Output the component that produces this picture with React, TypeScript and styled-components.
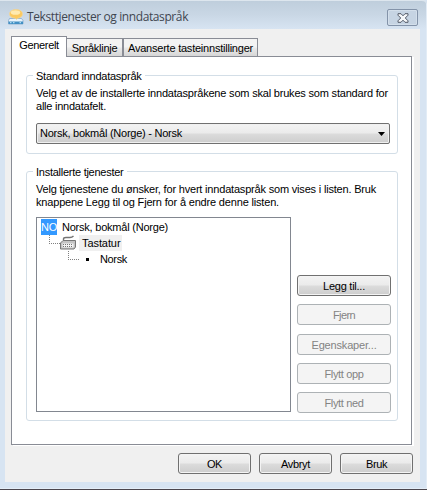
import React from "react";
import styled, { createGlobalStyle } from "styled-components";

const GlobalStyle = createGlobalStyle`
  * { box-sizing: border-box; }
  body { margin: 0; background: #d7e4f2; }
`;

const Window = styled.main`
  display: flex;
  flex-direction: column;
  width: 427px;
  height: 490px;
  padding: 0 7px 7px 5px;
  border-top: 1px solid #dde6ee;
  border-bottom: 1px solid #4b464d;
  border-top-right-radius: 4px;
  background: linear-gradient(#bfcedc 0, #c9d7e5 14px, #d7e4f2 28px);
  box-shadow: inset 0 -1px #e4eef8, inset -1px 0 #e2ecf6;
  color: #000;
  font: 11px/13px "Liberation Sans", Arial, sans-serif;
`;

const TitleBar = styled.header`
  display: flex;
  align-items: flex-start;
  flex: 0 0 28px;
  padding: 8px 2px 0 3px;
`;

const AppIcon = styled.svg`
  width: 16px;
  height: 16px;
`;

const Title = styled.h1`
  flex: 1;
  margin: 0 0 0 3px;
  color: #3f4650;
  font: 12px/16px "Open Sans", "Noto Sans", sans-serif;
  letter-spacing: -0.4px;
  white-space: nowrap;
`;

const CloseButton = styled.button`
  display: flex;
  align-items: center;
  justify-content: center;
  width: 31px;
  height: 17px;
  padding: 0;
  border: 1px solid #8393a9;
  border-radius: 2px;
  background: #c6d4e3;
  box-shadow: inset 0 0 0 1px #d3dfeb;
`;

const Client = styled.div`
  display: flex;
  flex-direction: column;
  flex: 1;
  padding: 7px 7px 0 6px;
  background: #f0f0f0;
`;

const TabStrip = styled.nav`
  display: flex;
  align-items: flex-end;
  height: 20px;
`;

const Tab = styled.button<{ $selected?: boolean; $width: number }>`
  position: relative;
  z-index: ${(p) => (p.$selected ? 1 : 0)};
  width: ${(p) => p.$width}px;
  height: ${(p) => (p.$selected ? 21 : 18)}px;
  margin-bottom: ${(p) => (p.$selected ? -1 : 0)}px;
  padding: ${(p) => (p.$selected ? "0 0 3px" : "2px 0 0")};
  border: 1px solid #898c95;
  border-bottom: 0;
  background: ${(p) => (p.$selected ? "#fff" : "linear-gradient(#f3f3f3 0 45%, #e8e8e8 55%, #d6d6d6)")};
  color: #000;
  font: inherit;
  white-space: nowrap;
  &:nth-child(2) { border-left: 0; }
`;

const Panel = styled.section`
  display: flex;
  flex-direction: column;
  gap: 17px;
  width: 401px;
  height: 389px;
  padding: 13px 13px 0 14px;
  border: 1px solid #898c95;
  background: #fff;
  box-shadow: 2px 1px #fff;
`;

const Group = styled.section<{ $height: number }>`
  display: flex;
  flex-direction: column;
  width: 372px;
  height: ${(p) => p.$height}px;
  margin-top: 5px;
  padding: 0 7px 0 9px;
  border: 1px solid #d3dee7;
  border-radius: 3px;
  & + & { margin-top: 0; }
`;

const Legend = styled.h2`
  align-self: flex-start;
  height: 13px;
  margin: -6px 0 0 -3px;
  padding: 0 3px;
  background: #fff;
  font: inherit;
`;

const Description = styled.p`
  height: 26px;
  margin: 4px 0 0;
`;

const Line = styled.span`
  display: block;
  white-space: nowrap;
`;

const Text = styled.span<{ $track: number }>`
  letter-spacing: ${(p) => p.$track}px;
  white-space: nowrap;
`;

const glossy = "linear-gradient(#f3f3f3 0, #ebebeb 48%, #dcdcdc 52%, #cdcdcd 100%)";

const Select = styled.button`
  display: flex;
  align-items: center;
  justify-content: space-between;
  width: 354px;
  height: 21px;
  margin-top: 10px;
  padding: 0 4px 0 3px;
  border: 1px solid #707070;
  border-radius: 2px;
  background: ${glossy};
  box-shadow: inset 0 0 0 1px #f0f0f0;
  color: #000;
  font: inherit;
`;

const Services = styled.div`
  display: flex;
  justify-content: space-between;
  align-items: flex-end;
  width: 355px;
  height: 196px;
  margin-top: 8px;
`;

const Tree = styled.ul`
  width: 255px;
  height: 195px;
  margin: 0;
  align-self: flex-start;
  padding: 1px 4px;
  border: 1px solid #828790;
  list-style: none;
`;

const TreeItem = styled.li`
  display: flex;
  align-items: center;
  height: 16px;
`;

const Branch = styled.i<{ $indent: number; $width: number }>`
  width: ${(p) => p.$width}px;
  height: 9px;
  align-self: flex-start;
  flex: none;
  margin-left: ${(p) => p.$indent}px;
  border-left: 1px dotted #808080;
  border-bottom: 1px dotted #808080;
`;

const LanguageBadge = styled.b`
  width: 16px;
  height: 16px;
  margin-right: 5px;
  background: #3399ff;
  color: #fff;
  font-size: 11px;
  font-weight: 400;
  line-height: 17px;
  letter-spacing: -0.3px;
  text-align: center;
`;

const KeyboardIcon = styled.svg`
  width: 16px;
  height: 16px;
`;

const Highlight = styled.span`
  height: 16px;
  width: 43px;
  margin-left: 3px;
  padding-left: 3px;
  background: #f0f0f0;
  line-height: 16px;
`;

const Bullet = styled.i`
  width: 3px;
  height: 3px;
  margin: 1px 11px 0 7px;
  background: #000;
`;

const ActionColumn = styled.div`
  display: flex;
  flex-direction: column;
  gap: 8px;
`;

const Button = styled.button<{ $width: number }>`
  width: ${(p) => p.$width}px;
  height: 21px;
  padding: 1px 0 0;
  border: 1px solid #707070;
  border-radius: 3px;
  background: ${glossy};
  box-shadow: inset 0 0 0 1px #f4f4f4;
  color: #000;
  font: inherit;
  &:disabled {
    border-color: #adb2b5;
    background: #f4f4f4;
    color: #838383;
  }
  &:nth-child(3):disabled { margin-top: 1px; }
`;

const Footer = styled.footer`
  display: flex;
  justify-content: flex-end;
  gap: 8px;
  padding: 8px 0 0;
`;

const actions = [
  { label: "Legg til...", track: -0.24, enabled: true },
  { label: "Fjern", track: -0.61 },
  { label: "Egenskaper...", track: -0.17 },
  { label: "Flytt opp", track: -0.35 },
  { label: "Flytt ned", track: -0.35 },
];

export default function App() {
  return (
    <>
      <GlobalStyle />
      <Window>
        <TitleBar>
          <AppIcon viewBox="0 0 16 16">
            <path d="M1.500 9.500h12l1.500 2v3.500H.5v-3.500z" fill="#e9f4fc" stroke="#86aacb" strokeWidth=".8" />
            <path d="M.5 12.500H15V15H.5z" fill="#4390c4" />
            <path d="M2 13.700h1.500M5 13.700h1.500M11.500 13.700H13" stroke="#c9ecfb" />
            <path d="M8 .5c3.800 0 6.500 1.800 6.500 4.400S12 9 9.700 9.200L8.500 10.500 7.300 9.200C3.800 9 1.500 7.300 1.500 4.900S4.200.5 8 .5z" fill="#fbc95f" stroke="#f2d79c" strokeWidth=".7" />
            <ellipse cx="7.500" cy="3.500" rx="4.700" ry="2.300" fill="#ffeab0" />
          </AppIcon>
          <Title>Teksttjenester og inndataspråk</Title>
          <CloseButton aria-label="Lukk">
            <svg width="12" height="10" viewBox="0 0 12 10">
              <path d="M1 .7h3L6 2.800 8 .7h3v1.500L8.300 5 11 7.800v1.500H8L6 7.200 4 9.300H1V7.800L3.700 5 1 2.200z" fill="#f5f7f9" stroke="#535a68" />
            </svg>
          </CloseButton>
        </TitleBar>
        <Client>
          <TabStrip>
            <Tab $selected $width={56}><Text $track={-0.336}>Generelt</Text></Tab>
            <Tab $width={56}><Text $track={-0.28}>Språklinje</Text></Tab>
            <Tab $width={135}><Text $track={-0.224}>Avanserte tasteinnstillinger</Text></Tab>
          </TabStrip>
          <Panel>
            <Group $height={79}>
              <Legend><Text $track={-0.247}>Standard inndataspråk</Text></Legend>
              <Description>
                <Line><Text $track={-0.193}>Velg et av de installerte inndataspråkene som skal brukes som standard for</Text></Line>
                <Line><Text $track={-0.235}>alle inndatafelt.</Text></Line>
              </Description>
              <Select>
                <Text $track={-0.246}>Norsk, bokmål (Norge) - Norsk</Text>
                <svg width="7" height="4" viewBox="0 0 7 4"><path d="M0 0h7L3.500 4z" /></svg>
              </Select>
            </Group>
            <Group $height={250}>
              <Legend><Text $track={-0.259}>Installerte tjenester</Text></Legend>
              <Description>
                <Line><Text $track={-0.189}>Velg tjenestene du ønsker, for hvert inndataspråk som vises i listen. Bruk</Text></Line>
                <Line><Text $track={-0.172}>knappene Legg til og Fjern for å endre denne listen.</Text></Line>
              </Description>
              <Services>
                <Tree>
                  <TreeItem>
                    <LanguageBadge>NO</LanguageBadge>
                    <Text $track={-0.221}>Norsk, bokmål (Norge)</Text>
                  </TreeItem>
                  <TreeItem>
                    <Branch $indent={8} $width={11} />
                    <KeyboardIcon viewBox="0 0 16 16">
                      <path d="M3.500 5V4c0-1 1-1.500 2.500-1.500h4c2 0 2.500-.5 3.500-1.500" fill="none" stroke="#747474" strokeWidth="1.400" />
                      <path d="M3 5.500h12.500V12L14 14H.5V8z" fill="#c4c4c4" stroke="#777" />
                      <path d="M2.500 8.500h11v4h-11z" fill="#f4f4f4" />
                      <path d="M3 9.500h10M3 11.500h10" stroke="#747474" strokeDasharray="1 1" />
                    </KeyboardIcon>
                    <Highlight><Text $track={-0.079}>Tastatur</Text></Highlight>
                  </TreeItem>
                  <TreeItem>
                    <Branch $indent={27} $width={11} />
                    <Bullet />
                    <Text $track={-0.345}>Norsk</Text>
                  </TreeItem>
                </Tree>
                <ActionColumn>
                  {actions.map(({ label, track, enabled }) => (
                    <Button key={label} $width={94} disabled={!enabled}><Text $track={track}>{label}</Text></Button>
                  ))}
                </ActionColumn>
              </Services>
            </Group>
          </Panel>
          <Footer>
            <Button $width={73}><Text $track={-0.447}>OK</Text></Button>
            <Button $width={73}><Text $track={-0.329}>Avbryt</Text></Button>
            <Button $width={73}><Text $track={-0.404}>Bruk</Text></Button>
          </Footer>
        </Client>
      </Window>
    </>
  );
}
